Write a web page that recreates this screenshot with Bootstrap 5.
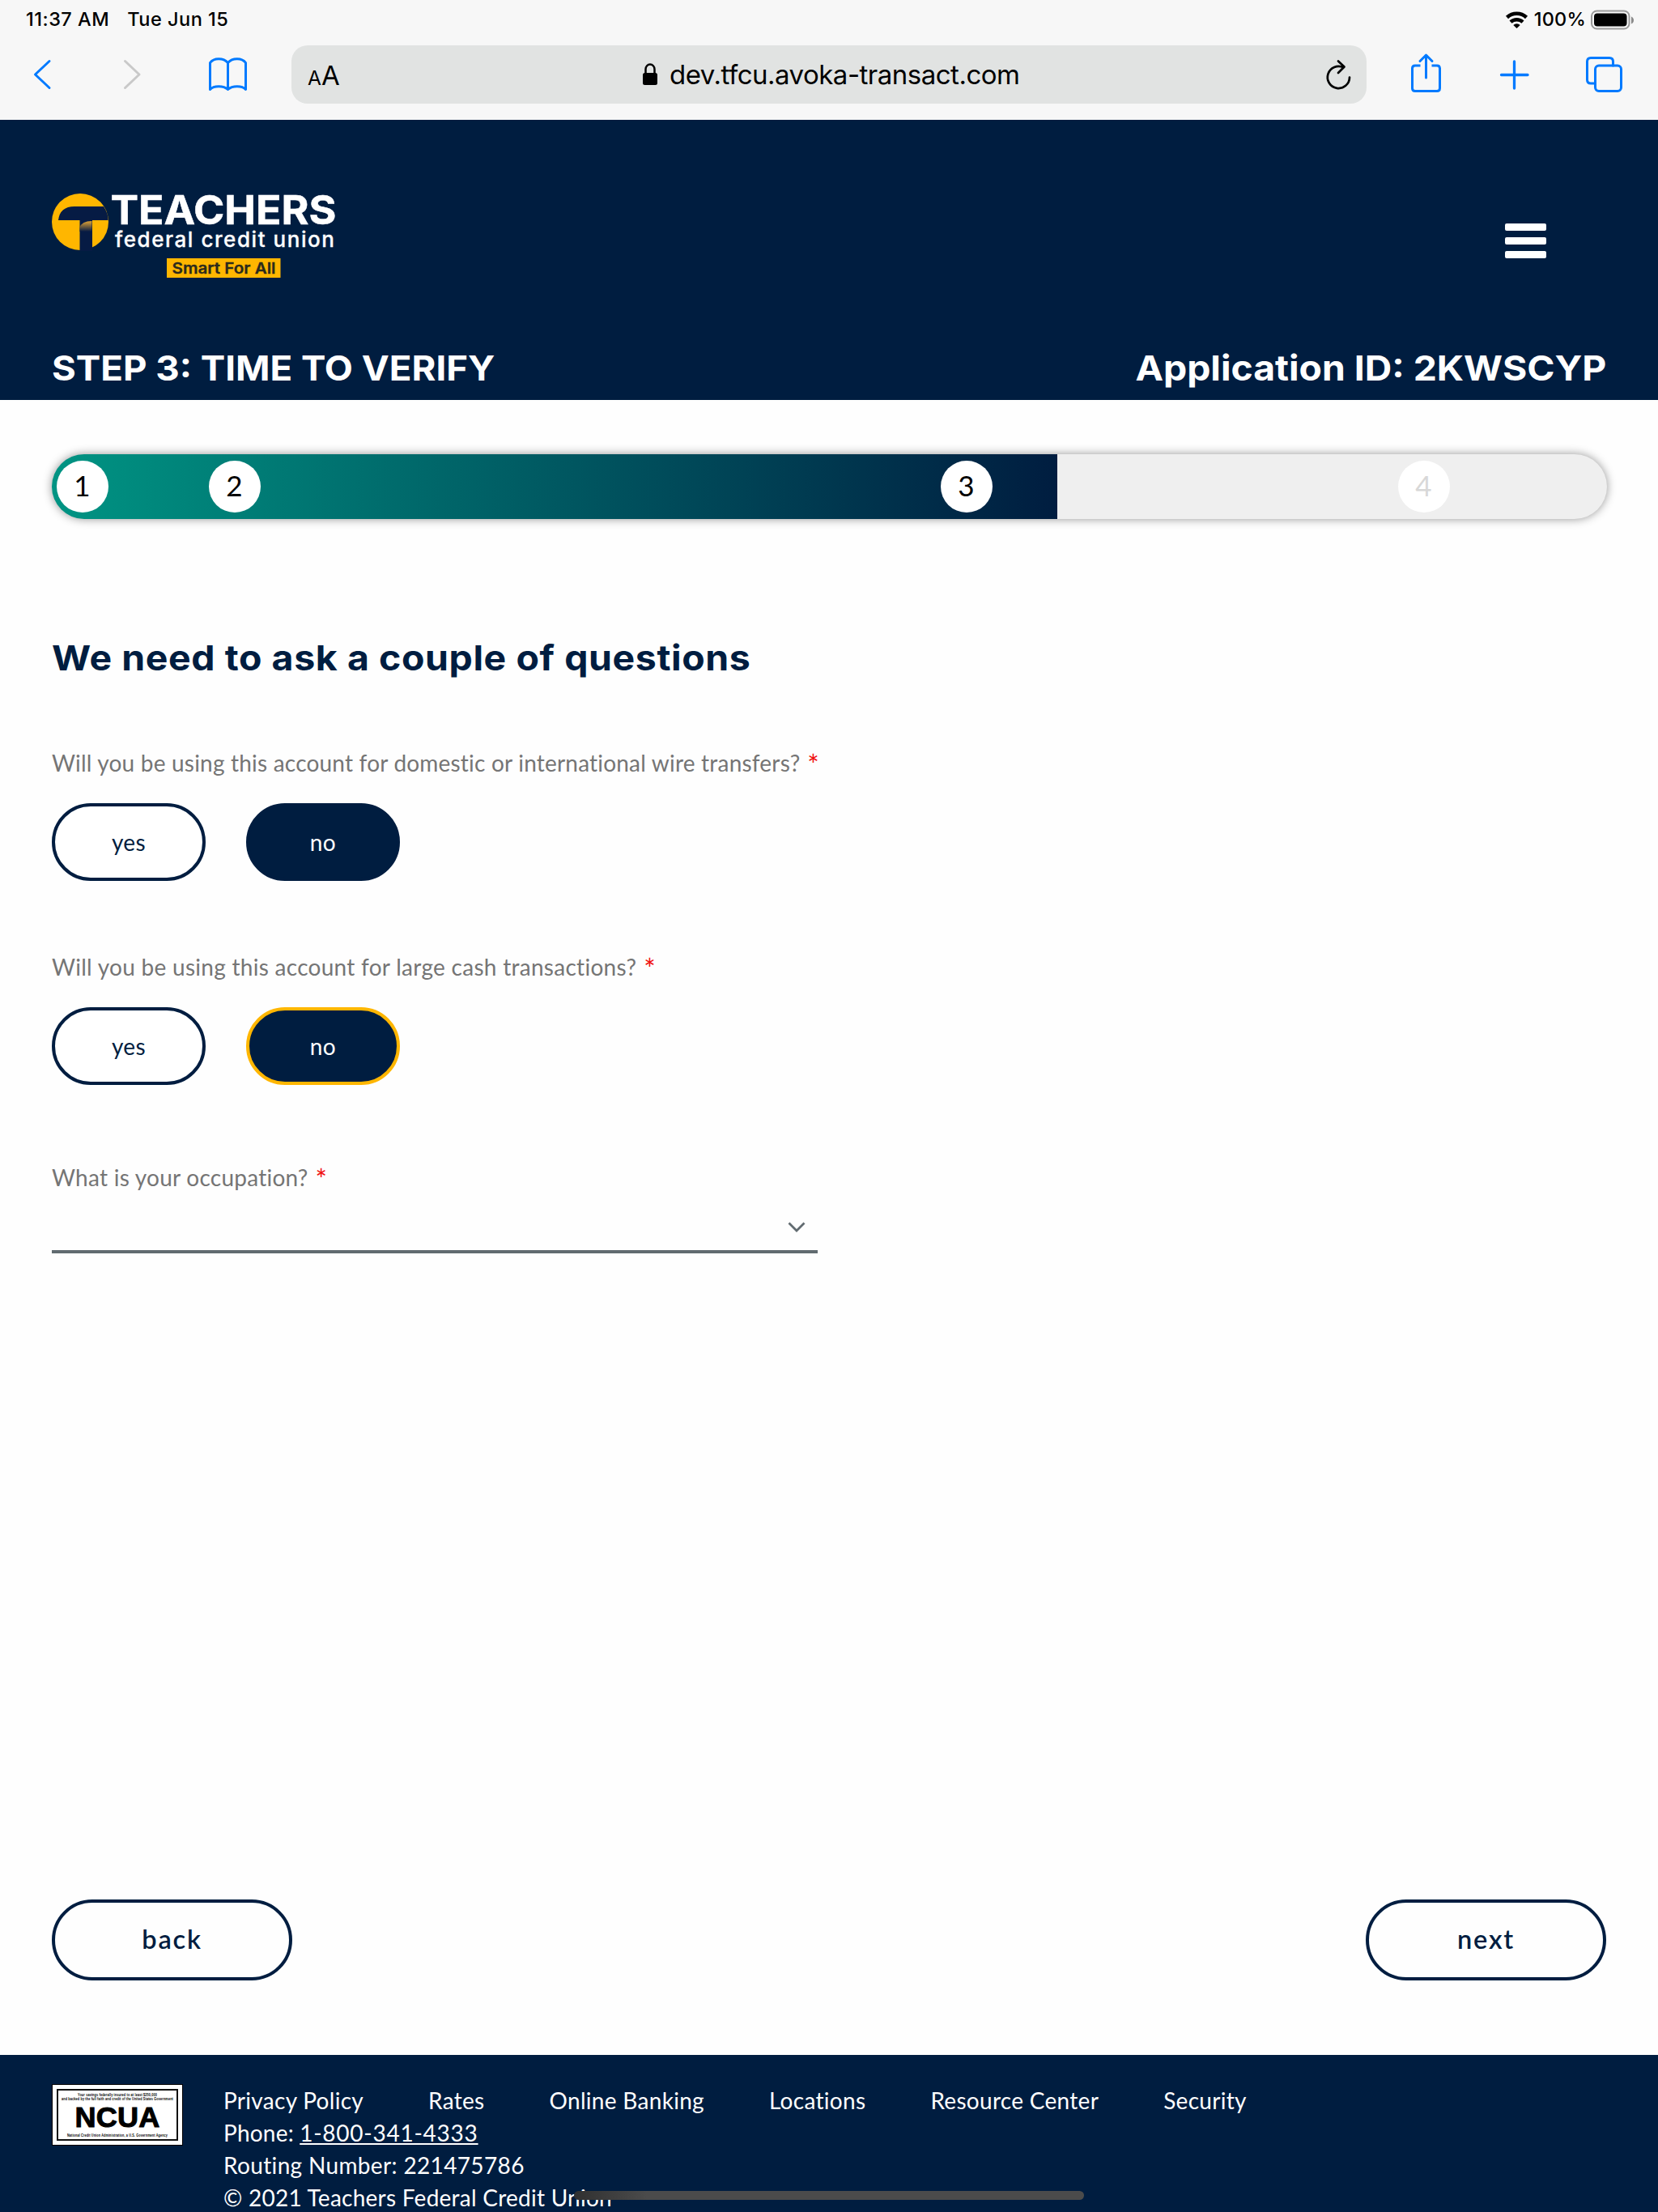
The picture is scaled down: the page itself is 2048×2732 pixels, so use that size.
<!DOCTYPE html>
<html lang="en">
<head>
<meta charset="utf-8">
<meta name="viewport" content="width=device-width, initial-scale=1">
<title>Teachers Federal Credit Union</title>
<link href="https://cdn.jsdelivr.net/npm/bootstrap@5.3.0/dist/css/bootstrap.min.css" rel="stylesheet">
<style>
:root{--navy:#001d40;--gold:#ffb600}
body{width:2048px;height:2732px;overflow:hidden;font-family:Lato,"Open Sans",sans-serif;font-size:28px;line-height:40px;letter-spacing:.2px;color:var(--navy);background:#fefefe}
svg{display:block;flex:none;overflow:visible}
.ios-chrome{height:148px;background:#f7f7f7;color:#000;font-family:Inter,sans-serif}
.status-line{height:56px;padding:10px 28px 0 32px;font-size:23.5px;font-weight:500;line-height:28.4px;letter-spacing:.5px}
.ios-icon{fill:none;stroke:#007aff;stroke-width:3;stroke-linecap:round;stroke-linejoin:round}
.address{width:1328px;height:72px;border-radius:20px;background:#e1e3e2;margin-left:50px}
.text-size{width:434px;padding-left:20px;line-height:74px}
.text-size .sm-a{font-size:24.5px;letter-spacing:0}.text-size .lg-a{font-size:33px}
.url{font-size:33px;line-height:72px;letter-spacing:-.5px;margin-left:15px}
.site-head{height:346px;background:var(--navy);color:#fff;padding:91px 64px 0}
.title-font{font-family:Inter,sans-serif;font-weight:700;font-size:43px;line-height:52px;letter-spacing:0;margin:0;transform-origin:left}
.title-step{transform:scaleX(1.06)}
.title-app{transform:scaleX(1.077);transform-origin:right}
.title-page{transform:scaleX(1.08);letter-spacing:.55px}
.burger{width:51px;height:43px;margin:37px 74px 0 0}
.burger span{height:9px;background:#fff;border-radius:2px}
.page-body{height:2044px;padding:67px 64px 92px}
.steps{width:1921px;height:80px;flex:none;border-radius:40px;box-shadow:0 0 12px rgba(0,0,0,.42);background:linear-gradient(90deg,#009483,#001d40) 0 0/1242px 100% no-repeat,#efefef;padding-left:6px}
.step-dot{width:64px;height:64px;background:#fff;color:#000;font-size:35px;padding:0 1px 4px 0;letter-spacing:0;flex:none}
.q-label{color:#757575}
.q-label b{color:#f01010;font-weight:400;font-size:34px;line-height:30px;margin-left:1.5px;vertical-align:-4px}
.choice{width:190px;height:96px;border:4px solid var(--navy);border-radius:48px;font-size:28px;line-height:40px;padding:0 0 1px;color:var(--navy);background:#fff;letter-spacing:.4px}
.choice.picked{background:var(--navy);color:#fff}
.choice.focused{border-color:var(--gold)}
.job{width:946px;height:75px;border-bottom:4px solid #616b70;padding:36px 15px 0 0}
.nav-btn{width:297px;height:100px;border:4px solid var(--navy);border-radius:50px;font-size:32.5px;font-weight:600;letter-spacing:1.8px;padding:0 0 1px;color:var(--navy)}
.site-foot{height:194px;background:var(--navy);color:#fff;padding:36px 64px 0}
.foot-text{margin-left:50px}
.foot-text a{color:#fff}
.home-bar{position:fixed;left:709px;top:2706px;width:630px;height:11px;border-radius:6px;background:linear-gradient(90deg,#303030,#4b4b4b 90px)}
</style>
<script src="https://cdn.jsdelivr.net/npm/bootstrap@5.3.0/dist/js/bootstrap.bundle.min.js"></script>
</head>
<body>
<div class="ios-chrome">
  <div class="status-line d-flex">
    <span>11:37 AM</span><span style="margin-left:22px">Tue Jun 15</span>
    <div class="ms-auto d-flex">
      <svg width="30" height="28" viewBox="1858 10 30 28" fill="none" stroke="#000" stroke-width="4.500"><path d="M1861.500 21.500a17.500 17.500 0 0 1 24 0M1866 27.200a11 11 0 0 1 15 0"/><path d="M1869.300 30.900a6 6 0 0 1 8.400 0L1873.500 35z" fill="#000" stroke="none"/></svg>
      <span style="margin-left:7px;letter-spacing:.2px">100%</span>
      <svg style="margin-left:5px" width="56" height="30" viewBox="1964 10 56 30"><rect x="1966" y="13.500" width="46.500" height="22" rx="6.500" fill="none" stroke="#999" stroke-width="2"/><rect x="1969" y="16.500" width="40.500" height="16" rx="4" fill="#000"/><path d="M2015 20.500v9q3-1.500 3-4.500t-3-4.500z" fill="#8a8a8a"/></svg>
    </div>
  </div>
  <div class="d-flex">
    <svg class="ios-icon" style="margin-left:36px" width="32" height="72" viewBox="36 56 32 72"><path d="M61 75.500 43.500 92 61 108.500"/></svg>
    <svg class="ios-icon" style="margin-left:79px;stroke:#c9c9c9" width="32" height="72" viewBox="147 56 32 72"><path d="M154.500 75.500 172 92l-17.500 16.500"/></svg>
    <svg class="ios-icon" style="margin-left:75px" width="56" height="72" viewBox="254 56 56 72"><path d="M281.500 77.500V110.500M281.500 77.500C276 71 264 71 259.500 77.500V110.500C264 105.500 276 105.500 281.500 110.500 287 105.500 299 105.500 303.500 110.500V77.500C299 71 287 71 281.500 77.500"/></svg>
    <div class="address d-flex">
      <div class="text-size"><span class="sm-a">A</span><span class="lg-a">A</span></div>
      <svg width="18" height="72" viewBox="794 56 18 72"><path d="M797.500 91v-5.500a5.500 6 0 0 1 11 0V91" fill="none" stroke="#000" stroke-width="2.500"/><rect x="794" y="90" width="18" height="15" rx="2.500"/></svg>
      <span class="url">dev.tfcu.avoka-transact.com</span>
      <svg class="ios-icon ms-auto" style="margin-right:14px;stroke:#000;stroke-width:2.700" width="38" height="72" viewBox="1636 56 38 72"><path d="M1659.500 83.300A13.600 13.600 0 1 0 1667 95.500M1653 75.500 1660.500 82.500 1653 90"/></svg>
    </div>
    <svg class="ios-icon" style="margin-left:48px" width="52" height="72" viewBox="1736 56 52 72"><path d="M1754.500 81H1748q-3.500 0-3.500 3.500V109q0 3.500 3.500 3.500H1775q3.500 0 3.500-3.500V84.500q0-3.500-3.500-3.500H1768.500" stroke-linecap="butt"/><path d="M1761.500 96V68M1754 75.500 1761.500 68 1769 75.500"/></svg>
    <svg class="ios-icon" style="margin-left:58px;stroke-width:3.300" width="50" height="72" viewBox="1846 56 50 72"><path d="M1854.500 92.500H1887M1870.500 76V109"/></svg>
    <svg class="ios-icon" style="margin-left:58px" width="56" height="72" viewBox="1954 56 56 72"><rect x="1970.500" y="81" width="32" height="31.500" rx="4.500"/><path d="M1992.500 81V76q0-4.500-4.500-4.500H1965q-4.500 0-4.500 4.500V98.500q0 4.500 4.500 4.500H1970.500"/></svg>
  </div>
</div>

<header class="site-head">
  <div class="d-flex justify-content-between align-items-start">
    <svg width="352" height="104" viewBox="64 239 352 104" font-family="Inter, sans-serif" letter-spacing="0">
      <defs><linearGradient id="fold" x1="0" y1="0" x2="0" y2="1"><stop offset="0" stop-color="#e0a335"/><stop offset="1" stop-color="#061b44"/></linearGradient></defs>
      <circle cx="99" cy="274" r="35" fill="#ffb600"/>
      <path d="M72 272Q74 255 92 255H128Q134 264 133.500 272H114V310H98.500V272Z" fill="#061b44"/>
      <path d="M98.500 286V281Q101 273 113.500 273V286Z" fill="url(#fold)"/>
      <text x="136.500" y="277" font-size="49" font-weight="700" fill="#fff" stroke="#fff" stroke-width=".5" textLength="279" lengthAdjust="spacingAndGlyphs">TEACHERS</text>
      <text x="142" y="305" font-size="26" font-weight="500" fill="#fff" stroke="#fff" stroke-width=".3" textLength="271" lengthAdjust="spacing">federal credit union</text>
      <rect x="206" y="319" width="140.500" height="24" fill="#ffb600"/>
      <text x="212.500" y="338" font-size="19" font-weight="600" fill="#2c2a1c" stroke="#2c2a1c" stroke-width=".3" textLength="128" lengthAdjust="spacingAndGlyphs">Smart For All</text>
    </svg>
    <div class="burger d-flex flex-column justify-content-between"><span></span><span></span><span></span></div>
  </div>
  <div class="d-flex justify-content-between" style="margin-top:85px">
    <h1 class="title-font title-step">STEP 3: TIME TO VERIFY</h1>
    <div class="title-font title-app">Application ID: 2KWSCYP</div>
  </div>
</header>

<main class="page-body d-flex flex-column">
  <div class="steps d-flex align-items-center">
    <div class="step-dot rounded-circle d-flex align-items-center justify-content-center">1</div>
    <div class="step-dot rounded-circle d-flex align-items-center justify-content-center" style="margin-left:124px">2</div>
    <div class="step-dot rounded-circle d-flex align-items-center justify-content-center" style="margin-left:840px">3</div>
    <div class="step-dot rounded-circle d-flex align-items-center justify-content-center" style="margin-left:501px;color:#d8d8d8">4</div>
  </div>
  <h2 class="title-font title-page align-self-start" style="margin-top:145px">We need to ask a couple of questions</h2>

  <div class="q-label" style="margin-top:84px;height:39px">Will you be using this account for domestic or international wire transfers? <b>*</b></div>
  <div class="d-flex" style="margin-top:31px;gap:50px">
    <button class="btn choice">yes</button><button class="btn choice picked">no</button>
  </div>
  <div class="q-label" style="margin-top:86px;height:39px;letter-spacing:.28px">Will you be using this account for large cash transactions? <b>*</b></div>
  <div class="d-flex" style="margin-top:31px;gap:50px">
    <button class="btn choice">yes</button><button class="btn choice picked focused">no</button>
  </div>
  <div class="q-label" style="margin-top:94px;height:39px;letter-spacing:.25px">What is your occupation? <b>*</b></div>
  <div class="job d-flex justify-content-end">
    <svg width="22" height="13" viewBox="0 0 22 13" fill="none" stroke="#616b70" stroke-width="2.800"><path d="M1.500 1.500 11 11l9.500-9.500"/></svg>
  </div>

  <div class="d-flex justify-content-between mt-auto">
    <button class="btn nav-btn">back</button><button class="btn nav-btn">next</button>
  </div>
</main>

<footer class="site-foot d-flex">
  <svg width="162" height="76" viewBox="0 0 162 76" font-family="Liberation Sans, Arial, sans-serif" font-weight="700">
    <rect x=".5" y=".5" width="161" height="75" fill="#fff" stroke="#000"/>
    <rect x="7" y="7" width="148" height="62" fill="none" stroke="#111" stroke-width="2"/>
    <text x="32" y="14.500" font-size="5.500" textLength="98" lengthAdjust="spacingAndGlyphs">Your savings federally insured to at least $250,000</text>
    <text x="12" y="20" font-size="5.500" textLength="138" lengthAdjust="spacingAndGlyphs">and backed by the full faith and credit of the United States Government</text>
    <text x="28.500" y="52.500" font-size="35" textLength="105" lengthAdjust="spacingAndGlyphs" stroke="#000">NCUA</text>
    <text x="19" y="65" font-size="5.500" textLength="124" lengthAdjust="spacingAndGlyphs">National Credit Union Administration, a U.S. Government Agency</text>
  </svg>
  <div class="foot-text text-nowrap">
    <div class="d-flex" style="gap:80px;letter-spacing:.3px"><span>Privacy Policy</span><span>Rates</span><span>Online Banking</span><span>Locations</span><span>Resource Center</span><span>Security</span></div>
    <div>Phone: <a href="#" style="letter-spacing:.75px">1-800-341-4333</a></div>
    <div style="letter-spacing:.35px">Routing Number: 221475786</div>
    <div style="letter-spacing:.25px">© 2021 Teachers Federal Credit Union</div>
  </div>
</footer>
<div class="home-bar"></div>
</body>
</html>
